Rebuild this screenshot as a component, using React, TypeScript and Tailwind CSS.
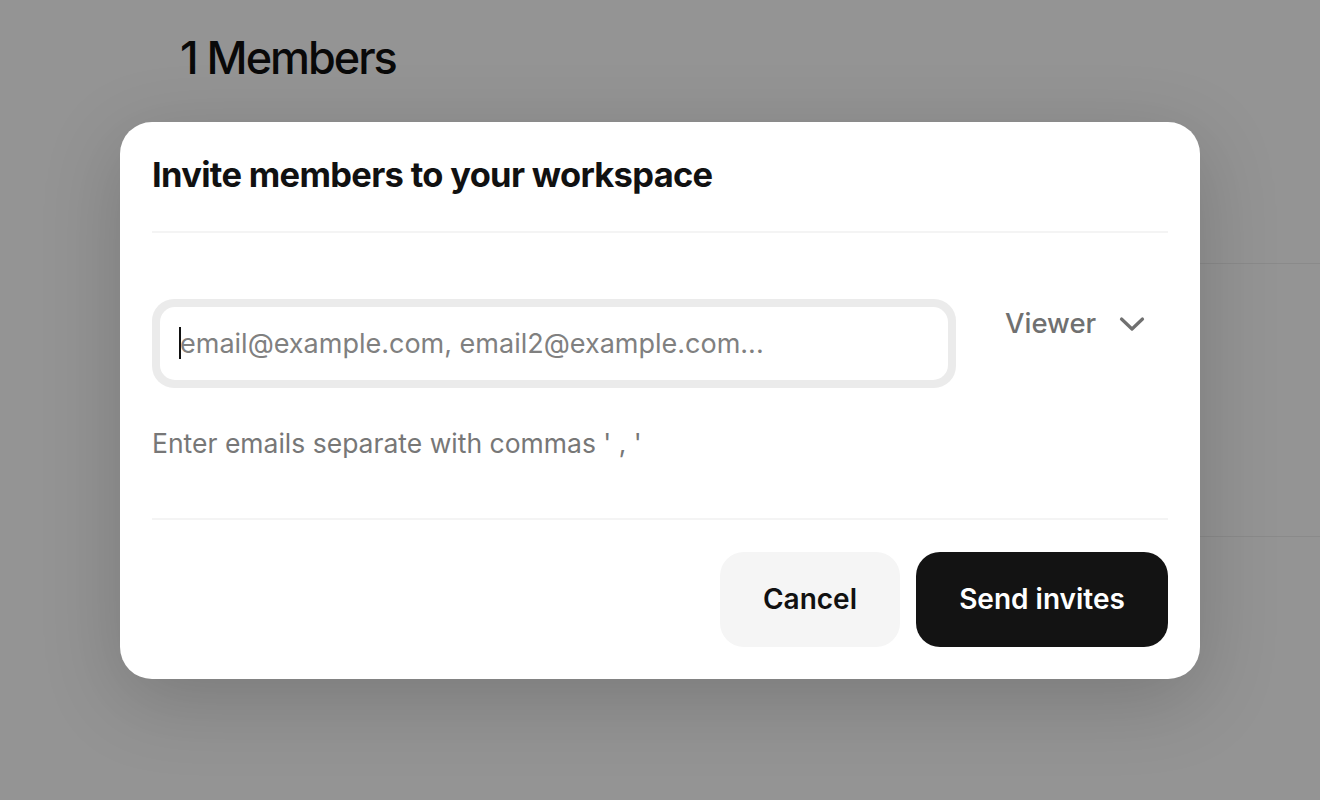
export default function App() {
  return (
    <div className="relative min-h-[800px] w-full overflow-hidden bg-white font-['Inter','Noto_Sans',sans-serif]">
      {/* page under the dialog */}
      <main className="pl-[180px] pt-[30px]">
        <h1 className="text-[45px] font-medium leading-[56px] tracking-[-0.045em] text-[#111]">1 Members</h1>
        <div className="mt-[177px] h-[274px] border-y border-[#eeeeee]" />
      </main>

      {/* overlay */}
      <div className="absolute inset-0 flex items-center justify-center bg-black/[0.42]">
        <div className="w-[1080px] rounded-[32px] bg-white px-8 pb-8 pt-[33px] shadow-[0_20px_80px_rgba(0,0,0,0.18)]">
          <div className="border-b-2 border-[#f4f4f4] pb-[36px]">
            <h2 className="text-[34.5px] font-bold leading-[40px] tracking-[-0.02em] text-[#111]">
              Invite members to your workspace
            </h2>
          </div>

          <div className="border-b-2 border-[#f4f4f4] pb-[60px] pt-[66px]">
            <div className="flex items-start gap-6">
              <div className="relative flex-1 rounded-[22px] bg-[#ebebeb] p-2">
                <input
                  className="h-[73px] w-full rounded-[15px] bg-white px-5 text-[27px] text-[#111] caret-transparent outline-none placeholder:text-[#808080]"
                  placeholder="email@example.com, email2@example.com..."
                />
                <span className="absolute left-[27px] top-[28px] h-[32px] w-[2px] bg-[#111]" />
              </div>
              <button className="-mt-[2px] flex h-[54px] w-[188px] items-center justify-between pl-[25px] pr-[23px] text-[27.5px] font-medium text-[#707070]">
                <span>Viewer</span>
                <svg width="26" height="16" viewBox="0 0 26 16" fill="none" stroke="currentColor" strokeWidth="3.2" strokeLinecap="round" strokeLinejoin="round">
                  <path d="M2.5 3 13 13 23.5 3" />
                </svg>
              </button>
            </div>
            <p className="mt-[40px] text-[26.5px] leading-[30px] text-[#777]">Enter emails separate with commas ' , '</p>
          </div>

          <div className="flex justify-end gap-4 pt-8">
            <button className="h-[95px] w-[180px] rounded-[24px] bg-[#f5f5f5] text-[28px] font-semibold text-[#111]">
              Cancel
            </button>
            <button className="h-[95px] w-[252px] rounded-[24px] bg-[#131313] text-[28px] font-semibold text-white">
              Send invites
            </button>
          </div>
        </div>
      </div>
    </div>
  );
}
